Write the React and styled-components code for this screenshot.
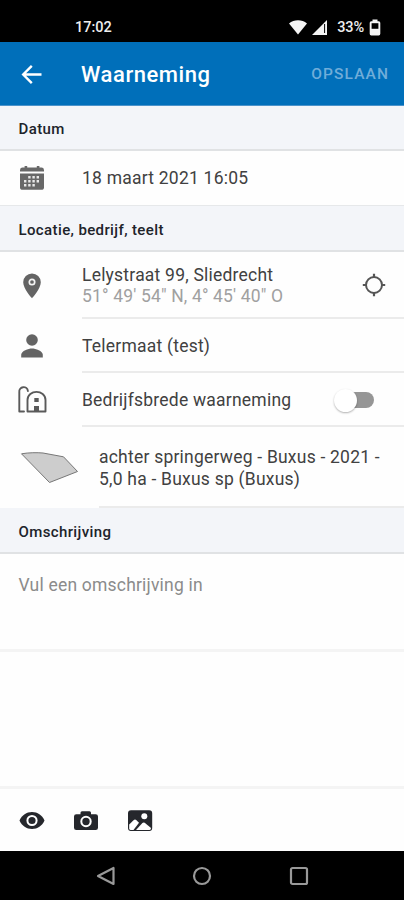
import styled, { createGlobalStyle } from "styled-components";

const GlobalStyle = createGlobalStyle`
  * {
    box-sizing: border-box;
  }

  body {
    margin: 0;
    background-color: #fff;
    font-family: Roboto, "Liberation Sans", sans-serif;
  }

  svg {
    display: block;
    flex-shrink: 0;
  }
`;

const Screen = styled.div`
  width: 404px;
  height: 900px;
  display: flex;
  flex-direction: column;
  overflow: hidden;
  background-color: #fefefe;
`;

const StatusBar = styled.div`
  height: 42px;
  padding: 13px 23px 0 75px;
  display: flex;
  align-items: flex-start;
  justify-content: space-between;
  background-color: #000;
  color: #eee;
  font-size: 14.5px;
  font-weight: 500;
  line-height: 29px;
`;

const Clock = styled.span`
  line-height: 30px;
`;

const StatusIcons = styled.div`
  display: flex;
  align-items: center;
  height: 28px;
`;

const Battery = styled.span`
  margin: 1px 5px 0 9px;
  letter-spacing: -0.1px;
`;

const AppBar = styled.header`
  height: 64px;
  padding: 0 15px 0 20px;
  display: flex;
  align-items: center;
  background-color: #006fba;
  border-bottom: 1px solid #4b93cb;
`;

const Title = styled.h1`
  flex: 1;
  margin: 2px 0 0 37px;
  color: #fff;
  font-size: 22px;
  font-weight: 500;
  letter-spacing: 0.55px;
`;

const SaveButton = styled.button`
  border: 0;
  padding: 0;
  background: none;
  color: #70add9;
  font-family: inherit;
  font-size: 15.5px;
  font-weight: 500;
  letter-spacing: 1.1px;
`;

const SectionTitle = styled.h2`
  height: ${(props) => props.$height}px;
  margin: 0;
  padding: ${(props) => props.$top || 2}px 18.5px 0;
  display: flex;
  align-items: center;
  background-color: #f3f5f9;
  border-bottom: 2px solid #e0e2e4;
  color: #20232a;
  font-size: 15px;
  font-weight: 500;
  letter-spacing: 0.38px;
`;

const Row = styled.div`
  height: ${(props) => props.$height}px;
  display: flex;
`;

const IconCell = styled.div`
  width: ${(props) => props.$width || 82}px;
  padding-left: 18px;
  display: flex;
  align-items: center;
`;

const RowBody = styled.div`
  flex: 1;
  padding-right: ${(props) => props.$right || 18.5}px;
  display: flex;
  align-items: center;
  justify-content: space-between;
  border-bottom: 2px solid #ebebeb;
`;

const DateRow = styled(Row)`
  border-bottom: 1px solid #e6e8ea;
`;

const DateBody = styled(RowBody)`
  border-bottom: 0;
`;

const Label = styled.div`
  padding-top: ${(props) => props.$top ?? 2}px;
  color: #414141;
  font-size: 17.5px;
  line-height: 22px;
  letter-spacing: 0.22px;
  white-space: pre-line;
`;

const Muted = styled.div`
  margin-top: -1px;
  color: #a0a0a0;
  letter-spacing: 0.16px;
`;

const Toggle = styled.div`
  width: 40px;
  height: 24px;
  display: flex;
  align-items: center;
`;

const Track = styled.div`
  width: 33px;
  height: 16px;
  margin: 2px 0 0 7px;
  display: flex;
  align-items: center;
  border-radius: 8px;
  background-color: #969696;
`;

const Thumb = styled.div`
  width: 23px;
  height: 23px;
  margin-left: -7px;
  flex-shrink: 0;
  border-radius: 50%;
  background-color: #fff;
  box-shadow: 0 1px 2px rgba(0, 0, 0, 0.3);
`;

const Description = styled.div`
  height: 98px;
  padding: 20px 18.5px;
  border-bottom: 3px solid #f4f4f4;
  color: #8b8b8b;
  font-size: 17.5px;
  line-height: 22px;
  letter-spacing: 0.2px;
`;

const Spacer = styled.div`
  flex: 1;
`;

const Toolbar = styled.div`
  height: 65px;
  padding: 0 18px;
  display: flex;
  align-items: center;
  gap: 26px;
  border-top: 3px solid #f4f4f4;
`;

const NavBar = styled.nav`
  height: 49px;
  display: flex;
  align-items: center;
  justify-content: center;
  gap: 76.5px;
  background-color: #000;
`;

const WifiIcon = () => (
  <svg width="18" height="15" viewBox="0 0 18 15" fill="#f4f4f4">
    <path d="M0 3.6C5-.8 13-.8 18 3.6L9 14.6Z" />
  </svg>
);

const SignalSvg = styled.svg`
  margin-left: 4px;
`;

const SignalIcon = () => (
  <SignalSvg width="17" height="17" viewBox="0 0 17 17">
    <path d="M16 1v15H1Z" fill="#f4f4f4" />
    <path d="M13.6 5v9" stroke="#000" strokeWidth="1" />
  </SignalSvg>
);

const BatteryIcon = () => (
  <svg width="12" height="17" viewBox="0 0 12 17">
    <path
      d="M3.5.5h5v1.7h1.2A1.7 1.7 0 0 1 11.3 4v10.8a1.7 1.7 0 0 1-1.6 1.7H2.3a1.7 1.7 0 0 1-1.6-1.7V4a1.7 1.7 0 0 1 1.6-1.8h1.2Z"
      fill="#f4f4f4"
    />
    <path d="M2.6 4.2h6.8v5.6H2.6z" fill="#000" />
  </svg>
);

const BackIcon = () => (
  <svg width="24" height="24" viewBox="0 0 24 24" fill="none" stroke="#fff" strokeWidth="2.4">
    <path d="M21.5 12.500H3M11.800 3.900 3.200 12.500l8.600 8.600" />
  </svg>
);

const CalendarIcon = () => (
  <svg width="28" height="28" viewBox="0 0 28 28">
    <path
      d="M2 7.500V6a2.600 2.600 0 0 1 2.600-2.400h2V1.900h2.600v1.700h9.600V1.900h2.600v1.700h2A2.600 2.600 0 0 1 26 6v1.500Z"
      fill="#686868"
    />
    <path d="M2 9.500h24v13.700a2.600 2.600 0 0 1-2.600 2.600H4.600A2.600 2.600 0 0 1 2 23.200Z" fill="#686868" />
    <g fill="#e8e8e8">
      <path d="M10.200 12h2.400v2.400h-2.400zM14.400 12h2.400v2.400h-2.400zM18.600 12H21v2.400h-2.400z" />
      <path d="M6 16h2.400v2.400H6zM10.200 16h2.400v2.400h-2.400zM14.400 16h2.400v2.400h-2.400zM18.600 16H21v2.400h-2.400z" />
      <path d="M6 20h2.400v2.400H6zM10.200 20h2.400v2.400h-2.400zM14.400 20h2.400v2.400h-2.400z" />
    </g>
  </svg>
);

const PinIcon = () => (
  <svg width="28" height="28" viewBox="0 0 28 28">
    <path
      d="M14 1.500a8.800 8.800 0 0 0-8.800 8.800C5.200 16.800 14 26.300 14 26.300s8.800-9.500 8.800-16A8.800 8.800 0 0 0 14 1.500Z"
      fill="#646464"
    />
    <circle cx="14" cy="10" r="2.700" fill="#646464" stroke="#f4f4f4" strokeWidth="1.700" />
  </svg>
);

const PersonIcon = () => (
  <svg width="28" height="28" viewBox="0 0 28 28" fill="#646464">
    <circle cx="14" cy="8" r="5.800" />
    <path d="M3.200 25.500v-2.700c0-4 7.200-6.300 10.800-6.300s10.800 2.300 10.800 6.300v2.700Z" />
  </svg>
);

const FarmIcon = () => (
  <svg width="29" height="28" viewBox="0 0 29 28" fill="none" stroke="#5a5a5a" strokeWidth="1.900">
    <path d="M6 25.500H1.300V6A4.300 4.300 0 0 1 9.900 5" strokeLinecap="round" strokeLinejoin="round" />
    <path
      d="M9.500 25.500V14C9.500 9 14 5.900 18.500 5.900S27.500 9 27.500 14v11.500Z"
      strokeLinejoin="round"
    />
    <rect x="16.300" y="12" width="4.400" height="4" fill="#5a5a5a" stroke="none" />
    <path d="M16 20h5v5.500h-5z" fill="#5a5a5a" stroke="none" />
  </svg>
);

const TargetIcon = () => (
  <svg width="24" height="24" viewBox="0 0 24 24" fill="none" stroke="#555">
    <circle cx="12" cy="12" r="8" strokeWidth="2" />
    <path d="M12 .8V5M12 19v4.200M.8 12H5M19 12h4.200" strokeWidth="2.200" />
  </svg>
);

const FieldSvg = styled.svg`
  margin: 1px 0 0 2px;
`;

const FieldShape = () => (
  <FieldSvg width="60" height="34" viewBox="0 0 60 34">
    <path
      d="M1.500 2.800C9 1.500 17 1.500 23 2L43.500 5.800 57.500 20.500 29.500 31.500Z"
      fill="#cdcdcd"
      stroke="#777"
      strokeWidth="1"
    />
  </FieldSvg>
);

const EyeIcon = () => (
  <svg width="28" height="28" viewBox="0 0 28 28">
    <path
      d="M1.500 14.500C4 9 8.500 6 14 6S24 9 26.500 14.500C24 20 19.500 23 14 23S4 20 1.500 14.500Z"
      fill="#25272c"
    />
    <circle cx="14" cy="14.500" r="4.600" fill="#25272c" stroke="#fff" strokeWidth="2" />
  </svg>
);

const CameraIcon = () => (
  <svg width="28" height="28" viewBox="0 0 28 28">
    <path
      d="M4.300 8.200h4.200V6.700A1.500 1.500 0 0 1 10 5.200h7.500A1.500 1.500 0 0 1 19 6.700v1.500h4.700a2.300 2.300 0 0 1 2.300 2.300v11.200a2.300 2.300 0 0 1-2.300 2.300H4.300A2.300 2.300 0 0 1 2 21.700V10.500a2.300 2.300 0 0 1 2.300-2.300Z"
      fill="#25272c"
    />
    <circle cx="14" cy="15.500" r="4.700" fill="#25272c" stroke="#fff" strokeWidth="2" />
  </svg>
);

const PictureIcon = () => (
  <svg width="28" height="28" viewBox="0 0 28 28">
    <rect
      x="2.700"
      y="5"
      width="22.800"
      height="19.400"
      rx="2.300"
      fill="#25272c"
      stroke="#25272c"
      strokeWidth="1.400"
    />
    <circle cx="18.300" cy="10.200" r="3" fill="#fff" />
    <path
      d="M3.200 18.500 7.800 14Q9 13 10.200 14L13 16.700 7.500 23.900H4.500Q3.200 23.900 3.200 22.500Z"
      fill="#fff"
    />
    <path d="M10 23.900 16.400 17Q17.500 16 18.700 16.800L25 22Q25 23.900 23.500 23.900Z" fill="#fff" />
  </svg>
);

const navIcon = {
  width: 20,
  height: 20,
  viewBox: "0 0 20 20",
  fill: "none",
  stroke: "#999",
  strokeWidth: 2.2,
  strokeLinejoin: "round",
};

const App = () => {
  return (
    <Screen>
      <GlobalStyle />
      <StatusBar>
        <Clock>17:02</Clock>
        <StatusIcons>
          <WifiIcon />
          <SignalIcon />
          <Battery>33%</Battery>
          <BatteryIcon />
        </StatusIcons>
      </StatusBar>
      <AppBar>
        <BackIcon />
        <Title>Waarneming</Title>
        <SaveButton>OPSLAAN</SaveButton>
      </AppBar>

      <SectionTitle $height={45}>Datum</SectionTitle>
      <DateRow $height={55}>
        <IconCell>
          <CalendarIcon />
        </IconCell>
        <DateBody>
          <Label $top={0}>18 maart 2021 16:05</Label>
        </DateBody>
      </DateRow>

      <SectionTitle $height={46} $top={3}>
        Locatie, bedrijf, teelt
      </SectionTitle>
      <Row $height={67}>
        <IconCell>
          <PinIcon />
        </IconCell>
        <RowBody>
          <Label>
            Lelystraat 99, Sliedrecht
            <Muted>51° 49' 54" N, 4° 45' 40" O</Muted>
          </Label>
          <TargetIcon />
        </RowBody>
      </Row>
      <Row $height={54}>
        <IconCell>
          <PersonIcon />
        </IconCell>
        <RowBody>
          <Label>Telermaat (test)</Label>
        </RowBody>
      </Row>
      <Row $height={54}>
        <IconCell>
          <FarmIcon />
        </IconCell>
        <RowBody $right={30}>
          <Label>Bedrijfsbrede waarneming</Label>
          <Toggle>
            <Track>
              <Thumb />
            </Track>
          </Toggle>
        </RowBody>
      </Row>
      <Row $height={81}>
        <IconCell $width={99}>
          <FieldShape />
        </IconCell>
        <RowBody>
          <Label $top={3}>{"achter springerweg - Buxus - 2021 -\n5,0 ha - Buxus sp (Buxus)"}</Label>
        </RowBody>
      </Row>

      <SectionTitle $height={46} $top={4}>
        Omschrijving
      </SectionTitle>
      <Description>Vul een omschrijving in</Description>
      <Spacer />
      <Toolbar>
        <EyeIcon />
        <CameraIcon />
        <PictureIcon />
      </Toolbar>
      <NavBar>
        <svg {...navIcon}>
          <path d="M17.500 2v16L2 10Z" />
        </svg>
        <svg {...navIcon}>
          <circle cx="10" cy="10" r="8" />
        </svg>
        <svg {...navIcon}>
          <rect x="2" y="2" width="16" height="16" rx="1.500" />
        </svg>
      </NavBar>
    </Screen>
  );
};

export default App;
